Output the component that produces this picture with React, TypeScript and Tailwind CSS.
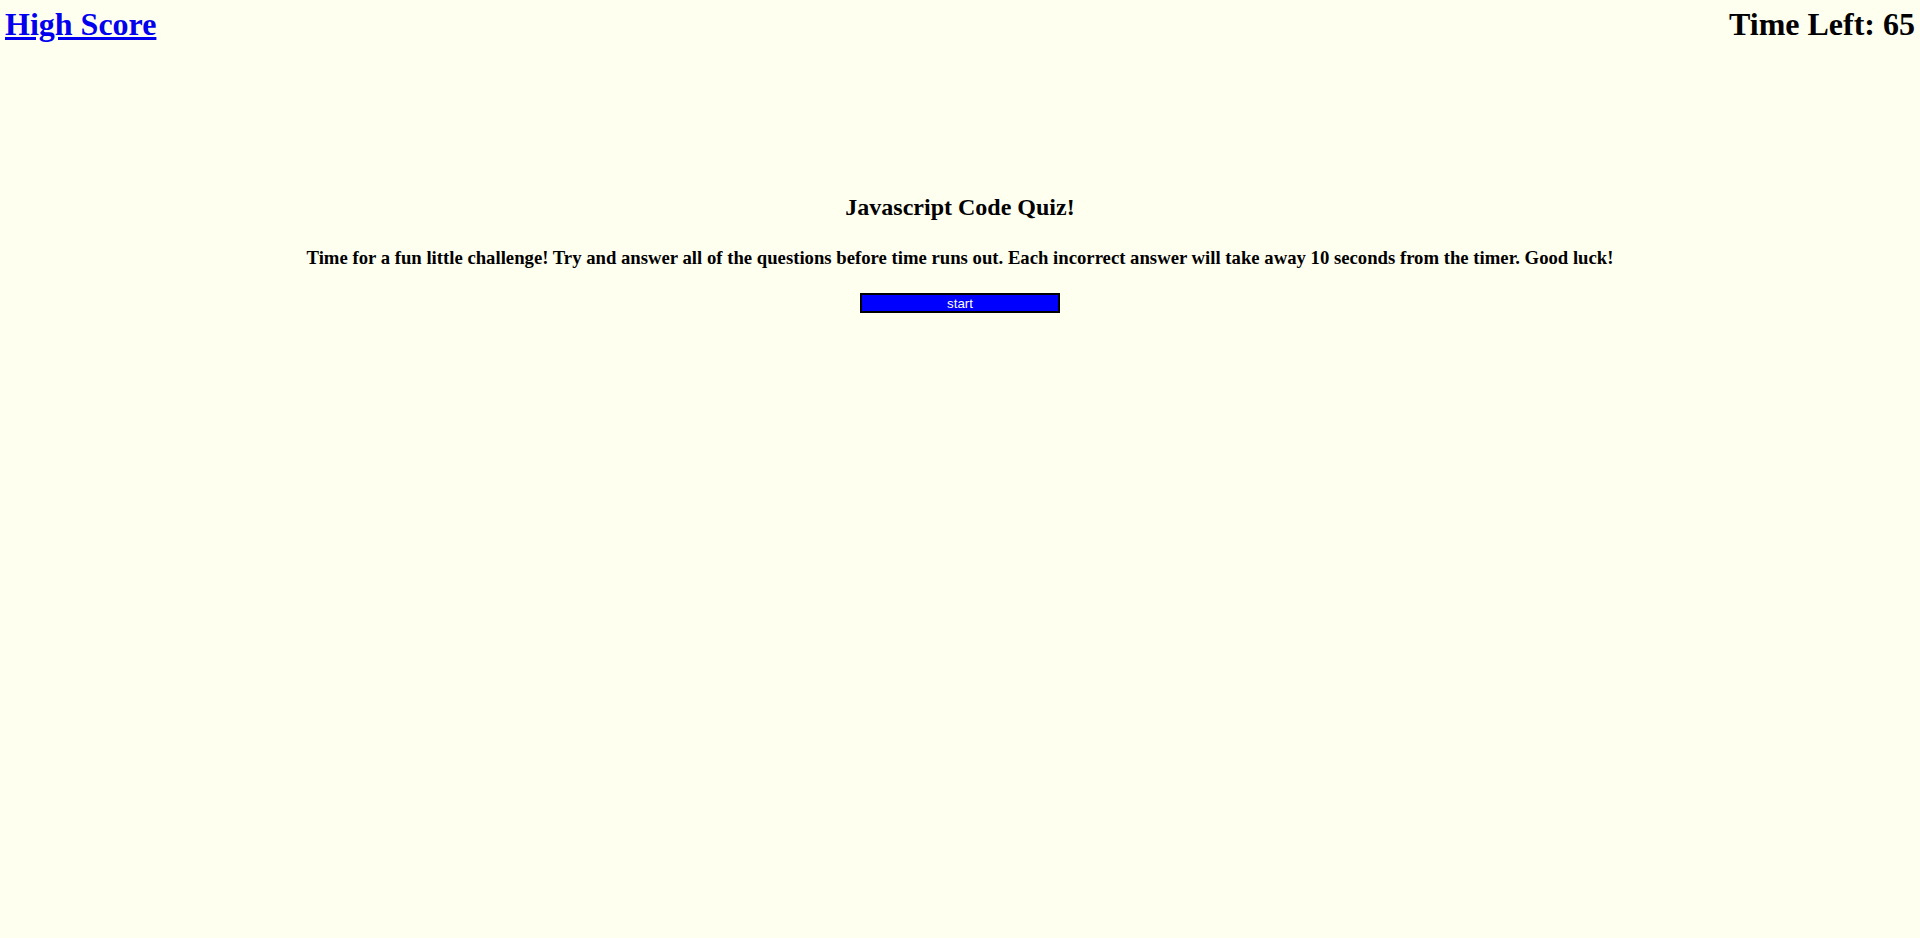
import React from "react";

export default function App() {
  return (
    <div className="min-h-[938px] w-full bg-[#fffff0] font-['Liberation_Serif','Times_New_Roman',serif] text-black">
      <header className="flex justify-between items-start pt-[6px] pl-[5px] pr-[5px]">
        <a href="#" className="text-[32px] leading-[36px] font-bold text-[#0000ee] underline">
          High Score
        </a>
        <h1 className="text-[32px] leading-[36px] font-bold">Time Left: 65</h1>
      </header>

      <main className="flex flex-col items-center mt-[151px]">
        <h2 className="text-[24px] leading-[28px] font-bold">Javascript Code Quiz!</h2>
        <h3 className="mt-[26px] text-[18.72px] leading-[22px] font-bold">
          Time for a fun little challenge! Try and answer all of the questions before time runs out. Each incorrect answer will take away 10 seconds from the timer. Good luck!
        </h3>
        <button className="mt-[24px] w-[200px] h-[20px] pt-[1px] bg-[#0000ff] border-2 border-black text-white text-[13.33px] leading-[15px] font-['Liberation_Sans',Arial,sans-serif]">
          start
        </button>
      </main>
    </div>
  );
}
